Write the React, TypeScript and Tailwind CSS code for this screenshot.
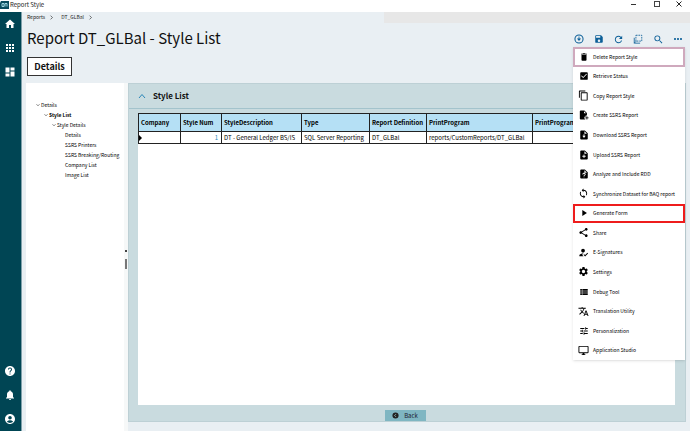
import type { ReactNode } from "react";
import type { IconType } from "react-icons";
import {
  MdAccountCircle,
  MdApps,
  MdCheckBox,
  MdContentCopy,
  MdDashboard,
  MdDelete,
  MdHelp,
  MdHome,
  MdHowToReg,
  MdMoreHoriz,
  MdNotifications,
  MdOutlineDesktopWindows,
  MdPlayArrow,
  MdRefresh,
  MdSave,
  MdSearch,
  MdSettings,
  MdShare,
  MdSync,
  MdTranslate,
  MdTune,
  MdViewList,
} from "react-icons/md";

const Svg = ({ children, className = "size-[10px]" }: { children: ReactNode; className?: string }) => (
  <svg viewBox="0 0 24 24" fill="currentColor" className={className} aria-hidden="true">
    {children}
  </svg>
);

const FileCreate = () => (
  <Svg>
    <path d="M4 1h9l6 6v6h-3v3h-3v5h2v2H4a2 2 0 0 1-2-2V3c0-1 1-2 2-2zm8 2v5h5zM18 15h2v3h3v2h-3v3h-2v-3h-3v-2h3z" />
  </Svg>
);
const FileDownload = () => (
  <Svg>
    <path d="M5 1h9l7 7v13a2 2 0 0 1-2 2H5a2 2 0 0 1-2-2V3c0-1 1-2 2-2zm8 2v6h6zM11 10v4H8l4 5 4-5h-3v-4z" fillRule="evenodd" />
  </Svg>
);
const FileUpload = () => (
  <Svg>
    <path d="M5 1h9l7 7v13a2 2 0 0 1-2 2H5a2 2 0 0 1-2-2V3c0-1 1-2 2-2zm8 2v6h6zM11 11v3H8v2h3v3h2v-3h3v-2h-3v-3z" fillRule="evenodd" />
  </Svg>
);
const FileAnalyze = () => (
  <Svg>
    <path d="M5 1h9l7 7v13a2 2 0 0 1-2 2H5a2 2 0 0 1-2-2V3c0-1 1-2 2-2zm8 2v6h6zM8 13h2c0-3 4-2 4 0 0 1-3 1-3 4h2c0-2 3-2 3-4 0-5-8-5-8 0zm3 5v2h2v-2z" fillRule="evenodd" />
  </Svg>
);

const sized = (Icon: IconType) => () => <Icon className="size-[11px]" />;

const menu: { label: string; Icon: () => ReactNode }[] = [
  { label: "Delete Report Style", Icon: () => <MdDelete className="size-[10px]" /> },
  { label: "Retrieve Status", Icon: () => <MdCheckBox className="size-[10px]" /> },
  { label: "Copy Report Style", Icon: sized(MdContentCopy) },
  { label: "Create SSRS Report", Icon: FileCreate },
  { label: "Download SSRS Report", Icon: FileDownload },
  { label: "Upload SSRS Report", Icon: FileUpload },
  { label: "Analyze and Include RDD", Icon: FileAnalyze },
  { label: "Synchronize Dataset for BAQ report", Icon: sized(MdSync) },
  { label: "Generate Form", Icon: () => <MdPlayArrow className="size-[10px]" /> },
  { label: "Share", Icon: sized(MdShare) },
  { label: "E-Signatures", Icon: sized(MdHowToReg) },
  { label: "Settings", Icon: sized(MdSettings) },
  { label: "Debug Tool", Icon: () => <MdViewList className="size-[10px]" /> },
  { label: "Translation Utility", Icon: sized(MdTranslate) },
  { label: "Personalization", Icon: () => <MdTune className="size-[10px]" /> },
  { label: "Application Studio", Icon: sized(MdOutlineDesktopWindows) },
];

const outline: Record<string, string> = {
  "Delete Report Style": "border-[#cfa9bd]",
  "Generate Form": "border-[#ee1c1c]",
};

function ActionMenu() {
  return (
    <ul className="absolute top-[13px] -right-[2px] z-10 grid h-[313px] w-[112px] auto-rows-fr bg-white shadow-sm">
      {menu.map(({ label, Icon }) => (
        <li key={label} className="flex min-w-0">
          <button
            type="button"
            className={`flex w-full items-center gap-[4px] border-2 pl-[3px] text-left whitespace-nowrap text-black ${outline[label] ?? "border-transparent"}`}
          >
            <span className="flex w-[11px] shrink-0 justify-center">
              <Icon />
            </span>
            <span className="text-[5px] leading-[8px]">{label}</span>
          </button>
        </li>
      ))}
    </ul>
  );
}

const Chevron = ({ d, className }: { d: string; className: string }) => (
  <svg viewBox="0 0 8 8" fill="none" stroke="currentColor" className={className} aria-hidden="true">
    <path d={d} />
  </svg>
);

function TreeItem({ label, bold, children }: { label: string; bold?: boolean; children?: ReactNode }) {
  return (
    <li>
      <div className={`flex h-[10px] items-center gap-px whitespace-nowrap ${bold ? "font-bold" : ""}`}>
        <span className="flex w-[4px] shrink-0">
          {children ? <Chevron d="M1 2.5l3 3 3-3" className="size-[4px]" /> : null}
        </span>
        {label}
      </div>
      {children ? <ul className="pl-[8px]">{children}</ul> : null}
    </li>
  );
}

function Tree() {
  return (
    <nav aria-label="Sections" className="relative w-[102px] shrink-0 border-r-4 border-[#f6f8f8] bg-white pt-[17px] pl-[10px] text-[5px] leading-[10px] text-black">
      <ul>
        <TreeItem label="Details">
          <TreeItem label="Style List" bold>
            <TreeItem label="Style Details">
              <TreeItem label="Details" />
              <TreeItem label="SSRS Printers" />
              <TreeItem label="SSRS Breaking/Routing" />
              <TreeItem label="Company List" />
              <TreeItem label="Image List" />
            </TreeItem>
          </TreeItem>
        </TreeItem>
      </ul>
      <div className="absolute top-[167px] -right-[3px] flex flex-col items-center gap-[7px]">
        <span className="size-[2px] bg-[#444]" />
        <span className="h-[10px] w-[2px] bg-[#777]" />
      </div>
    </nav>
  );
}

const columns = [
  { name: "Company", width: "w-[42px]" },
  { name: "Style Num", width: "w-[41px]" },
  { name: "StyleDescription", width: "w-[80px]" },
  { name: "Type", width: "w-[68px]" },
  { name: "Report Definition", width: "w-[57px]" },
  { name: "PrintProgram", width: "w-[106px]" },
  { name: "PrintProgramOption", width: "" },
];
const row = ["", "1", "DT - General Ledger BS/IS", "SQL Server Reporting", "DT_GLBal", "reports/CustomReports/DT_GLBal", ""];

function StyleTable() {
  return (
    <table className="w-full table-fixed border-collapse text-left text-[6px] leading-[10px] whitespace-nowrap text-black">
      <thead>
        <tr className="h-[18px] bg-[#b5e0f5]">
          {columns.map((c) => (
            <th key={c.name} scope="col" className={`border border-[#222] px-[2px] py-0 font-bold ${c.width}`}>
              {c.name}
            </th>
          ))}
        </tr>
      </thead>
      <tbody>
        <tr className="h-[12px] bg-white">
          {row.map((value, i) => (
            <td key={columns[i].name} className={`border border-[#222] p-0 ${i === 1 ? "pr-[3px] text-right text-[#2a86b8]" : i === 0 ? "" : "pl-[2px]"}`}>
              {i === 0 ? (
                <svg viewBox="0 0 3 6" className="h-[6px] w-[3px]" aria-hidden="true">
                  <path d="M0 0l3 3-3 3z" />
                </svg>
              ) : (
                value
              )}
            </td>
          ))}
        </tr>
      </tbody>
    </table>
  );
}

const SideButton = ({ label, Icon }: { label: string; Icon: IconType }) => (
  <button type="button" aria-label={label} className="flex h-[12px] items-center justify-center">
    <Icon className="size-[12px]" />
  </button>
);

function Toolbar() {
  return (
    <div className="relative flex w-[109px] items-center justify-between text-[#0b5f98]">
      <button type="button" aria-label="New" className="flex size-[10px] items-center justify-center">
        <Svg>
          <path d="M12 1a11 11 0 1 0 0 22 11 11 0 0 0 0-22zm0 2.500a8.500 8.500 0 1 1 0 17 8.500 8.500 0 0 1 0-17zM11 6v5H7l5 6 5-6h-4V6z" fillRule="evenodd" />
        </Svg>
      </button>
      <button type="button" aria-label="Save" className="flex size-[10px] items-center justify-center">
        <MdSave className="size-[10px] shrink-0" />
      </button>
      <button type="button" aria-label="Refresh" className="flex size-[10px] items-center justify-center">
        <MdRefresh className="size-[11px] shrink-0" />
      </button>
      <button type="button" aria-label="Copy" className="flex size-[10px] items-center justify-center">
        <svg viewBox="0 0 24 24" fill="none" stroke="currentColor" strokeWidth="2" className="size-[10px]" aria-hidden="true">
          <path d="M7 3h14v14H7z" strokeDasharray="4 2" />
          <path d="M3 9v13h14" />
          <path d="M3 22l5-5" />
        </svg>
      </button>
      <button type="button" aria-label="Search" className="flex size-[10px] items-center justify-center">
        <MdSearch className="size-[11px] shrink-0" />
      </button>
      <button type="button" aria-label="More actions" aria-expanded="true" className="flex size-[10px] items-center justify-center">
        <MdMoreHoriz className="size-[12px] shrink-0" />
      </button>
      <ActionMenu />
    </div>
  );
}

export default function App() {
  return (
    <div className="flex min-h-screen flex-col overflow-hidden bg-[#e9eff3] font-['Noto_Sans_CJK_SC','Noto_Sans',sans-serif]">
      <header className="flex h-[12px] items-start justify-between bg-white pr-[8px] text-[6px] leading-[9px] text-[#222]">
        <div className="flex items-center gap-px">
          <svg viewBox="0 0 9 8" className="h-[8px] w-[9px]" aria-hidden="true">
            <path fill="#0a4c5d" d="M1 0h8v8H0V2z" />
            <path fill="none" stroke="#9fd6e0" d="M2 2.500h2v3H2zM5 5.500v-3h2v3" />
          </svg>
          <span>Report Style</span>
        </div>
        <div className="flex h-[8px] w-[51px] items-center justify-between">
          <button type="button" aria-label="Minimize" className="flex size-[6px] items-center">
            <span className="h-px w-[5px] bg-[#333]" />
          </button>
          <button type="button" aria-label="Maximize" className="size-[6px] border border-[#444]" />
          <button type="button" aria-label="Close" className="flex size-[6px]">
            <svg viewBox="0 0 6 6" stroke="#222" className="size-[6px]" aria-hidden="true">
              <path d="M.5.5l5 5M5.500.5l-5 5" />
            </svg>
          </button>
        </div>
      </header>

      <div className="flex flex-1">
        <aside className="flex w-[22px] shrink-0 flex-col justify-between border-r border-[#7fa0aa] bg-[#004554] pt-[6px] pr-[2px] pb-[6px] text-white">
          <div className="flex flex-col gap-[12px]">
            <SideButton label="Home" Icon={MdHome} />
            <SideButton label="Apps" Icon={MdApps} />
            <SideButton label="Dashboard" Icon={MdDashboard} />
          </div>
          <div className="flex flex-col gap-[12px]">
            <SideButton label="Help" Icon={MdHelp} />
            <SideButton label="Notifications" Icon={MdNotifications} />
            <SideButton label="Account" Icon={MdAccountCircle} />
          </div>
        </aside>

        <div className="flex min-w-0 flex-1 flex-col pl-[4px]">
          <div className="flex h-[11px] items-start text-[5px] leading-[10px] text-[#222]">
            <nav aria-label="Breadcrumb" className="flex flex-1 items-center gap-[4px] pl-px">
              <a href="#reports">Reports</a>
              <Chevron d="M2.500 1l3 3-3 3" className="size-[5px]" />
              <a href="#dt" className="pl-[3px]">
                DT_GLBal
              </a>
              <Chevron d="M2.500 1l3 3-3 3" className="size-[5px]" />
            </nav>
            <div className="h-full w-[306px] bg-[#e7e7e7]" />
          </div>

          <div className="flex h-[32px] items-center justify-between pr-[7px] pl-px">
            <h1 className="pb-[2px] text-[15px] leading-[24px] text-[#111]">Report DT_GLBal - Style List</h1>
            <Toolbar />
          </div>

          <div className="flex pt-[2px] pb-[7px] pl-px">
            <button type="button" className="h-[19px] w-[45px] border border-[#333] bg-white text-[9px] leading-[16px] font-bold text-[#111]">
              Details
            </button>
          </div>

          <div className="flex flex-1 pr-[4px]">
            <Tree />
            <main className="mb-[9px] flex min-w-0 flex-1 flex-col border border-[#bdd0d5] bg-[#c9dbdf]">
              <h2 className="flex h-[25px] items-center gap-[7px] border-b border-[#a3c3cc] pl-[9px] text-[8px] leading-[12px] font-bold text-[#111]">
                <Chevron d="M1 6l3-3.500L7 6" className="size-[8px] text-[#2a86b8]" />
                Style List
              </h2>
              <div className="mt-[4px] mr-[10px] ml-[9px] flex-1 bg-white">
                <StyleTable />
              </div>
              <div className="flex justify-center pt-[5px] pr-[4px]">
                <button type="button" className="flex h-[11px] w-[41px] items-center justify-center gap-[5px] bg-[#7fb6c2] text-[6px] leading-[10px] text-[#223]">
                  <svg viewBox="0 0 8 8" className="size-[7px]" aria-hidden="true">
                    <circle cx="4" cy="4" r="3.500" fill="#222" />
                    <path d="M4.500 2.500L3 4l1.500 1.500" fill="none" stroke="#9cc" />
                  </svg>
                  Back
                </button>
              </div>
            </main>
          </div>
        </div>
      </div>
    </div>
  );
}
